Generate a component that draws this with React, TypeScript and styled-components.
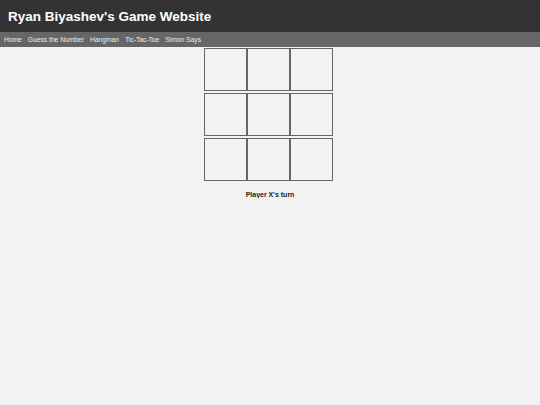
import React, { useState } from "react";
import styled, { createGlobalStyle } from "styled-components";

const GlobalStyle = createGlobalStyle`
  html, body {
    margin: 0;
    padding: 0;
    background: #f2f2f2;
    font-family: "Liberation Sans", Arial, sans-serif;
  }
`;

const Header = styled.header`
  background: #333;
  color: #fff;
  height: 32px;
  display: flex;
  align-items: center;
  padding: 0 8px;
`;

const Title = styled.h1`
  margin: 0;
  font-size: 13.5px;
  font-weight: bold;
`;

const Nav = styled.nav`
  background: #666;
  height: 15px;
  display: flex;
  align-items: center;
  gap: 6px;
  padding: 0 4px;
`;

const NavLink = styled.a`
  color: #eee;
  font-size: 6.7px;
  text-decoration: none;
`;

const Main = styled.main`
  display: flex;
  flex-direction: column;
  align-items: center;
  padding-top: 1px;
`;

const Board = styled.div`
  display: flex;
  flex-direction: column;
  gap: 2px;
  margin-left: -3px;
`;

const Row = styled.div`
  display: flex;
`;

const Cell = styled.button`
  width: 43px;
  height: 43px;
  box-sizing: border-box;
  border: 1px solid #666;
  background: #f2f2f2;
  padding: 0;
  font-family: inherit;
  font-size: 20px;
  font-weight: bold;
  color: #333;
  cursor: pointer;
`;

const Status = styled.p`
  margin: 10px 0 0;
  font-size: 7px;
  font-weight: bold;
  color: #222;
`;

const links = ["Home", "Guess the Number", "Hangman", "Tic-Tac-Toe", "Simon Says"];

export default function App() {
  const [cells, setCells] = useState<string[]>(Array(9).fill(""));
  const [player, setPlayer] = useState("X");

  const play = (i: number) => {
    if (cells[i]) return;
    const next = cells.slice();
    next[i] = player;
    setCells(next);
    setPlayer(player === "X" ? "O" : "X");
  };

  return (
    <>
      <GlobalStyle />
      <Header>
        <Title>Ryan Biyashev's Game Website</Title>
      </Header>
      <Nav>
        {links.map((l) => (
          <NavLink key={l} href="#">
            {l}
          </NavLink>
        ))}
      </Nav>
      <Main>
        <Board>
          {[0, 1, 2].map((r) => (
            <Row key={r}>
              {[0, 1, 2].map((c) => (
                <Cell key={c} onClick={() => play(r * 3 + c)}>
                  {cells[r * 3 + c]}
                </Cell>
              ))}
            </Row>
          ))}
        </Board>
        <Status>Player {player}'s turn</Status>
      </Main>
    </>
  );
}
